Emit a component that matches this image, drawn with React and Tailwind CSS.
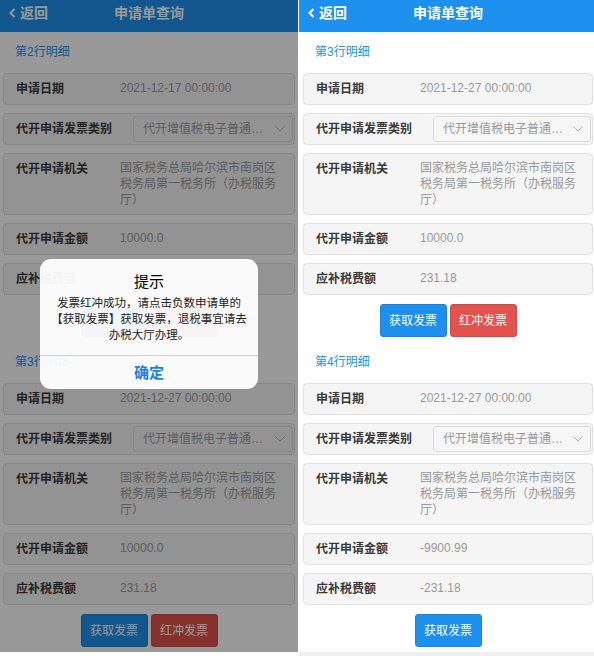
import React from "react";

const FONT = "font-[family-name:Liberation_Sans,Noto_Sans_CJK_SC,sans-serif]";

function Chevron() {
  return (
    <svg width="10" height="6" viewBox="0 0 10 6" className="shrink-0">
      <polyline points="0.5,0.5 5,5 9.5,0.5" fill="none" stroke="#b3b3b3" strokeWidth="1" />
    </svg>
  );
}

function InfoRow({ label, value }) {
  return (
    <div className="flex min-h-[32px] rounded-[4px] border border-[#e1e1e1] bg-[#f5f5f5] py-[6px] pl-[12px] pr-[12px]">
      <div className="w-[104px] shrink-0 text-[12px] font-bold leading-[18px] text-[#3a3a3a]">{label}</div>
      <div className="flex-1 text-[12px] leading-[16px] text-[#999]">{value}</div>
    </div>
  );
}

function SelectRow({ label, value }) {
  return (
    <div className="flex h-[32px] items-center rounded-[4px] border border-[#e1e1e1] bg-[#f5f5f5] pl-[12px] pr-[1px]">
      <div className="w-[117px] shrink-0 text-[12px] font-bold leading-[18px] text-[#3a3a3a]">{label}</div>
      <div className="flex h-[26px] flex-1 items-center justify-between rounded-[3px] border border-[#dcdcdc] bg-[#f6f6f6] pl-[9px] pr-[7px]">
        <span className="w-[124px] truncate text-[12px] leading-[16px] text-[#999]">{value}</span>
        <Chevron />
      </div>
    </div>
  );
}

function Section({ s }) {
  return (
    <div>
      <div className="pt-[12px] pb-[13px] pl-[12px] text-[12px] leading-[16px] text-[#1d8fec]">{s.title}</div>
      <div className="flex flex-col gap-[8px]">
        <InfoRow label="申请日期" value={s.date} />
        <SelectRow label="代开申请发票类别" value="代开增值税电子普通发票" />
        <InfoRow label="代开申请机关" value="国家税务总局哈尔滨市南岗区税务局第一税务所（办税服务厅）" />
        <InfoRow label="代开申请金额" value={s.amount} />
        <InfoRow label="应补税费额" value={s.tax} />
      </div>
      <div className="mt-[9px] mb-[5px] flex justify-center gap-[3px]">
        <button className="h-[33px] w-[67px] rounded-[3px] border border-[#1784db] bg-[#1d8fec] text-[12px] text-white">获取发票</button>
        {s.red && (
          <button className="h-[33px] w-[67px] rounded-[3px] border border-[#d24a46] bg-[#e2534f] text-[12px] text-white">红冲发票</button>
        )}
      </div>
    </div>
  );
}

function Header() {
  return (
    <div className="grid h-[32px] grid-cols-[1fr_auto_1fr] bg-[#1d8fec] text-white">
      <div className="flex items-start pl-[9px]">
        <div className="flex h-[26px] items-center gap-[4px]">
          <svg width="7" height="10" viewBox="0 0 7 10">
            <polyline points="5.5,1 1.5,5 5.5,9" fill="none" stroke="white" strokeWidth="2" />
          </svg>
          <span className="text-[14px] font-bold leading-[26px]">返回</span>
        </div>
      </div>
      <div className="text-[14px] font-bold leading-[26px]">申请单查询</div>
      <div />
    </div>
  );
}

function Panel({ sections, mx }) {
  return (
    <div>
      <Header />
      <div className={mx}>
        {sections.map((s, i) => (
          <Section key={i} s={s} />
        ))}
      </div>
    </div>
  );
}

export default function App() {
  const left = [
    { title: "第2行明细", date: "2021-12-17 00:00:00", amount: "10000.0", tax: "231.18", red: true },
    { title: "第3行明细", date: "2021-12-27 00:00:00", amount: "10000.0", tax: "231.18", red: true },
  ];
  const right = [
    { title: "第3行明细", date: "2021-12-27 00:00:00", amount: "10000.0", tax: "231.18", red: true },
    { title: "第4行明细", date: "2021-12-27 00:00:00", amount: "-9900.99", tax: "-231.18", red: false },
  ];
  return (
    <div className={`${FONT} flex h-[659px] w-[594px] items-start gap-[1px] overflow-hidden bg-white`}>
      <div className="relative w-[298px] shrink-0 overflow-hidden">
        <Panel sections={left} mx="mx-[3px]" />
        <div className="absolute inset-0 bg-black/40" />
        <div className="absolute left-[40px] top-[259px] w-[218px] overflow-hidden rounded-[11px] bg-white/95 text-center">
          <div className="px-[6px] pt-[14px] pb-[12px]">
            <div className="text-[15px] leading-[18px] text-black">提示</div>
            <div className="mt-[4px] text-[11.5px] leading-[16px] text-[#222]">
              发票红冲成功，请点击负数申请单的
              <br />
              【获取发票】获取发票，退税事宜请去
              <br />
              办税大厅办理。
            </div>
          </div>
          <div className="h-[34px] border-t border-[#cfcfcf] text-[15px] font-bold leading-[34px] text-[#1a7fe6]">确定</div>
        </div>
      </div>
      <div className="w-[298px] shrink-0">
        <Panel sections={right} mx="mx-[4px]" />
        <div className="h-[4px] bg-[#efefef]" />
      </div>
    </div>
  );
}
